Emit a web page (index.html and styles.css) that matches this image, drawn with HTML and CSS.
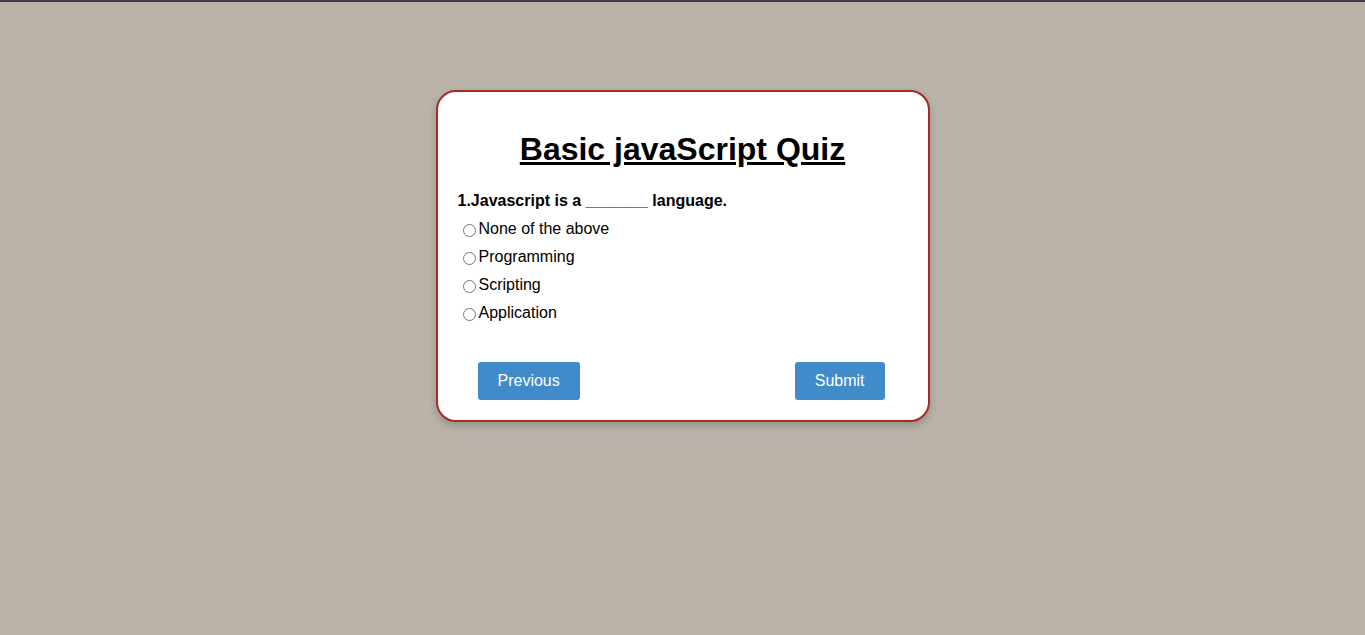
FILE: index.html
```html
<!DOCTYPE html>
<html>
<head>
<meta charset="utf-8">
<title>Basic javaScript Quiz</title>
<link rel="stylesheet" href="styles.css">
</head>
<body>
<div class="topbar"></div>
<main class="page">
  <div class="card">
    <h1 class="title">Basic javaScript Quiz</h1>
    <p class="question">1.Javascript is a _______ language.</p>
    <div class="options">
      <label class="option"><input type="radio" name="q1">None of the above</label>
      <label class="option"><input type="radio" name="q1">Programming</label>
      <label class="option"><input type="radio" name="q1">Scripting</label>
      <label class="option"><input type="radio" name="q1">Application</label>
    </div>
    <div class="actions">
      <button class="btn">Previous</button>
      <button class="btn">Submit</button>
    </div>
  </div>
</main>
</body>
</html>
```

FILE: styles.css
```css
html, body {
  margin: 0;
  padding: 0;
}
body {
  background: #bab3aa;
  font-family: "Liberation Sans", Arial, sans-serif;
  color: #000;
  min-height: 635px;
}
.topbar {
  height: 2px;
  background: #453d4f;
}
.page {
  display: flex;
  justify-content: center;
  padding-top: 88px;
}
.card {
  width: 450px;
  background: #fff;
  border: 2px solid #a52a2a;
  border-radius: 20px;
  padding: 18px 20px 20px;
  box-shadow: 0 4px 8px rgba(0, 0, 0, 0.2);
}
.title {
  margin: 21px 0 24px;
  font-size: 32px;
  font-weight: bold;
  text-align: center;
  text-decoration: underline;
  line-height: 37px;
}
.question {
  margin: 0 0 5px;
  font-size: 16px;
  font-weight: bold;
  line-height: 18px;
}
.options {
  display: flex;
  flex-direction: column;
}
.option {
  display: block;
  height: 28px;
  line-height: 28px;
  font-size: 16px;
}
.option input {
  margin: 3px 3px 0 5px;
  width: 13px;
  height: 13px;
  vertical-align: -3px;
}
.actions {
  display: flex;
  justify-content: space-between;
  padding: 0 23px 0 20px;
  margin-top: 35px;
}
.btn {
  background: #428bca;
  color: #fff;
  border: none;
  border-radius: 3px;
  font-family: "Liberation Sans", Arial, sans-serif;
  font-size: 16px;
  line-height: 18px;
  padding: 10px 20px;
  cursor: pointer;
}
```
